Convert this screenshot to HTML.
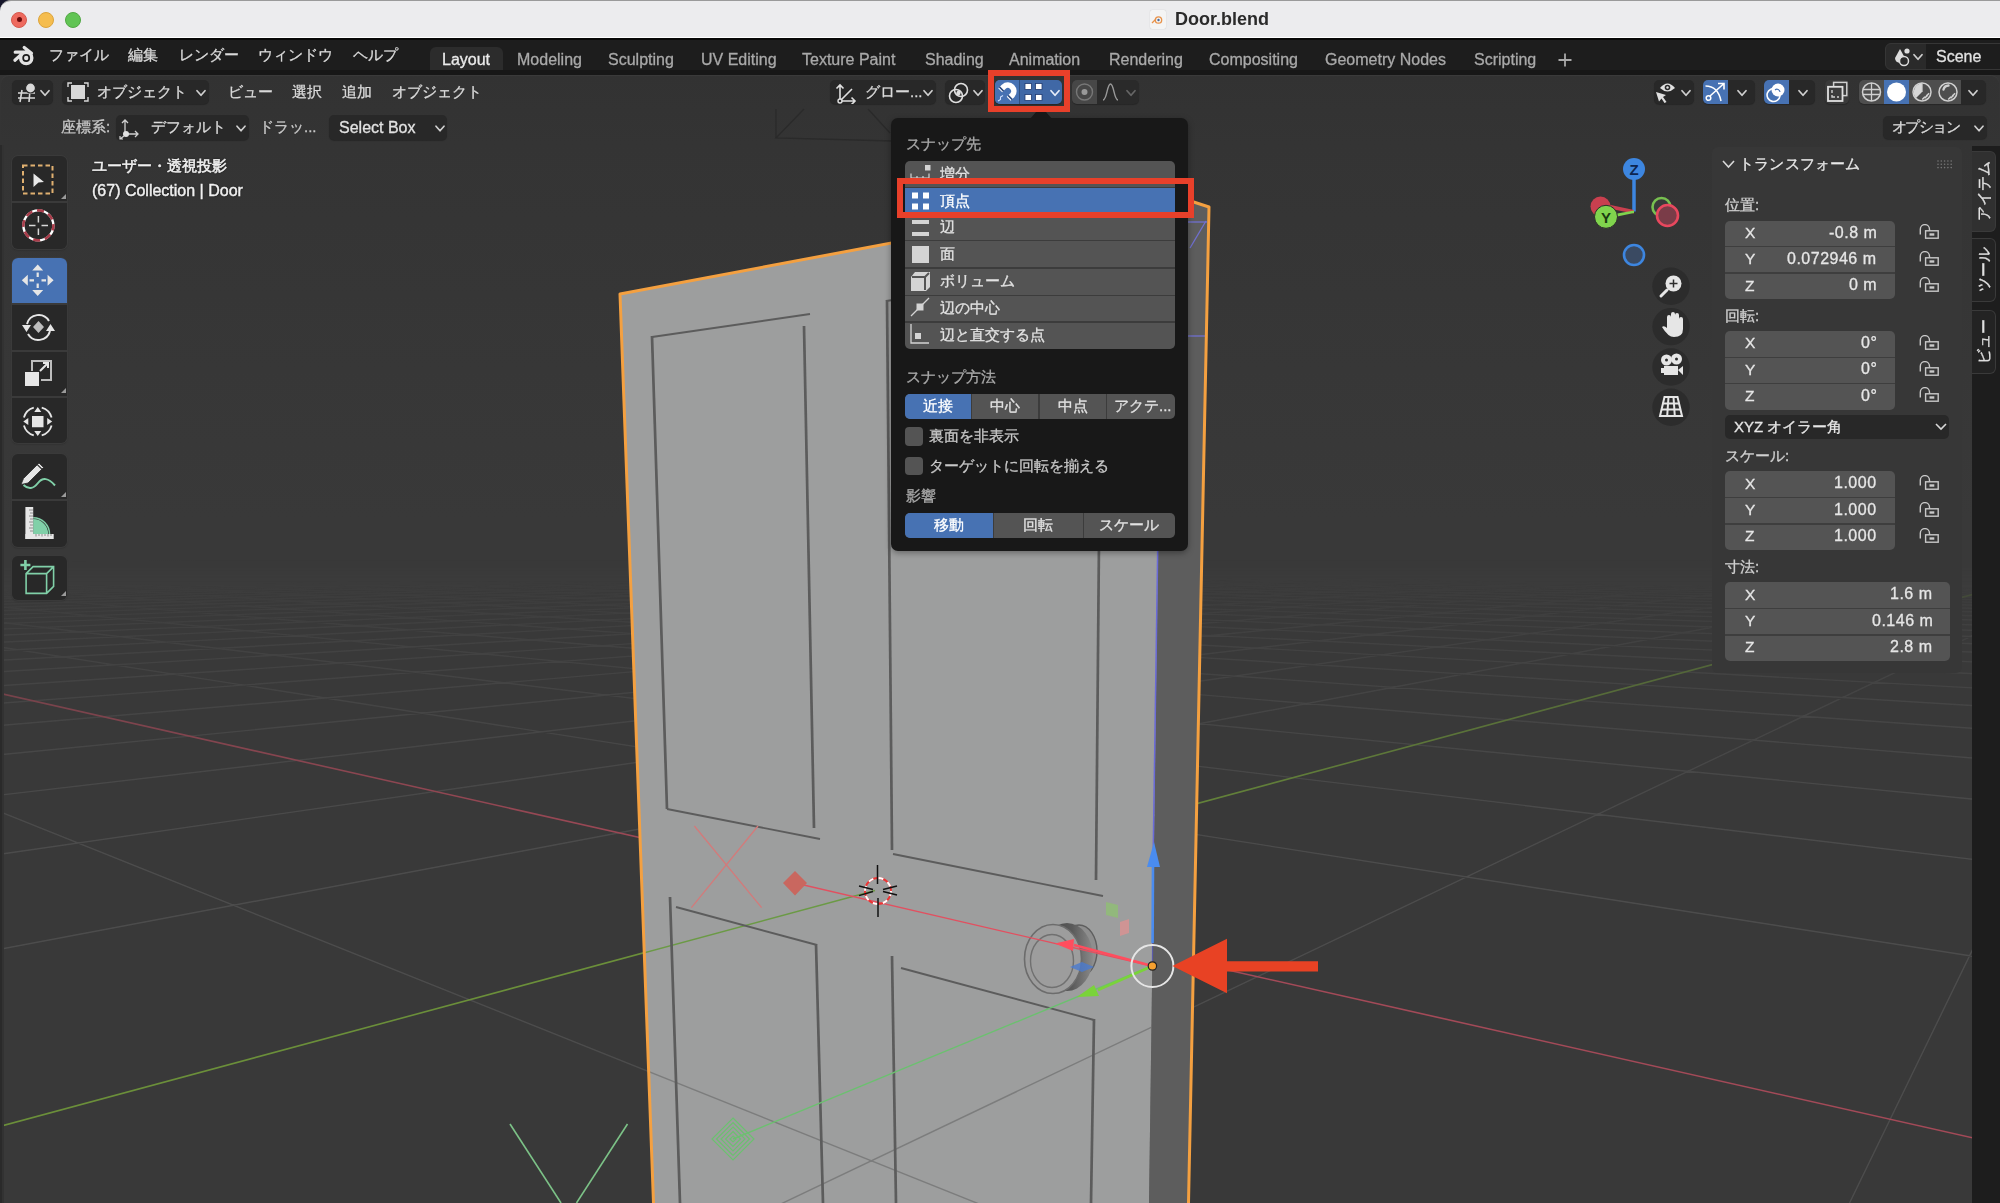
<!DOCTYPE html><html><head><meta charset="utf-8"><style>
*{margin:0;padding:0;box-sizing:border-box}
html,body{width:2000px;height:1203px;overflow:hidden;background:#393939}
body{font-family:"Liberation Sans",sans-serif}
.a{position:absolute}
.t{position:absolute;white-space:nowrap;line-height:1;font-family:"Liberation Sans",sans-serif;-webkit-text-stroke:0.3px currentColor;will-change:transform}
</style></head><body><svg class="a" style="left:0;top:0" width="2000" height="1203" viewBox="0 0 2000 1203">
<defs><linearGradient id="gf" x1="0" y1="0" x2="0" y2="1203" gradientUnits="userSpaceOnUse">
<stop offset="0" stop-color="#fff" stop-opacity="0"/><stop offset="0.465" stop-color="#fff" stop-opacity="0"/><stop offset="0.53" stop-color="#fff" stop-opacity="0.45"/><stop offset="0.72" stop-color="#fff" stop-opacity="1"/></linearGradient>
<mask id="gm"><rect x="0" y="0" width="2000" height="1203" fill="url(#gf)"/></mask>
<clipPath id="dc"><polygon points="620,294 1163,192 1149,1203 653.5,1203 "/></clipPath>
</defs>
<linearGradient id="vbg" x1="0" y1="145" x2="0" y2="520" gradientUnits="userSpaceOnUse"><stop offset="0" stop-color="#343434"/><stop offset="1" stop-color="#393939"/></linearGradient><rect x="0" y="0" width="2000" height="1203" fill="url(#vbg)"/>
<g mask="url(#gm)">
<path d="M11643.9 642.9L652014.9 7531.0M11643.9 642.9L879.5 553.9M10972.2 637.3L640752.2 7531.0M12351.2 650.5L868.1 554.0M10370.0 632.4L629489.5 7531.0M13172.6 659.3L856.5 554.1M9826.9 627.9L618226.7 7531.0M14138.2 669.7L844.6 554.2M9334.8 623.8L606964.0 7531.0M15289.6 682.1L832.6 554.3M8886.7 620.1L595701.3 7531.0M16686.2 697.1L820.3 554.5M8477.0 616.7L584438.5 7531.0M18415.5 715.7L807.8 554.6M8100.9 613.6L573175.8 7531.0M20612.6 739.4L795.0 554.7M7754.6 610.7L561913.1 7531.0M23496.9 770.4L782.1 554.8M7434.5 608.1L550650.3 7531.0M27450.9 812.9L768.8 555.0M7137.9 605.6L539387.6 7531.0M33204.6 874.8L755.3 555.1M6862.2 603.3L528124.9 7531.0M42349.3 973.2L741.6 555.2M6605.2 601.2L516862.1 7531.0M59134.9 1153.7L727.6 555.4M6365.3 599.2L505599.4 7531.0M100009.6 1593.4L713.3 555.5M6140.6 597.4L494336.7 7531.0M348569.7 4267.0L698.7 555.7M5929.8 595.6L483073.9 7531.0M640940.1 7531.0L683.8 555.8M5731.7 594.0L471811.2 7531.0M627371.3 7531.0L668.7 556.0M5545.1 592.5L460548.5 7531.0M613802.5 7531.0L653.2 556.1M5369.1 591.0L449285.7 7531.0M600233.7 7531.0L637.4 556.3M5202.7 589.6L438023.0 7531.0M586664.9 7531.0L621.2 556.4M5045.3 588.3L426760.3 7531.0M573096.1 7531.0L604.7 556.6M4896.1 587.1L415497.5 7531.0M559527.3 7531.0L587.9 556.8M4754.4 585.9L404234.8 7531.0M545958.5 7531.0L570.7 556.9M4619.8 584.8L392972.1 7531.0M532389.7 7531.0L553.1 557.1M4491.7 583.7L381709.4 7531.0M518820.9 7531.0L535.1 557.3M4369.7 582.7L370446.6 7531.0M505252.1 7531.0L516.7 557.5M4253.2 581.8L359183.9 7531.0M491683.3 7531.0L497.9 557.7M4142.1 580.8L347921.2 7531.0M478114.5 7531.0L478.7 557.9M4035.8 580.0L336658.4 7531.0M464545.7 7531.0L459.0 558.1M3934.1 579.1L325395.7 7531.0M450976.9 7531.0L438.9 558.3M3836.8 578.3L314133.0 7531.0M437408.1 7531.0L418.3 558.5M3743.4 577.6L302870.2 7531.0M423839.3 7531.0L397.2 558.7M3653.8 576.8L291607.5 7531.0M410270.5 7531.0L375.5 558.9M3567.8 576.1L280344.8 7531.0M396701.7 7531.0L353.4 559.1M3485.2 575.4L269082.0 7531.0M383132.9 7531.0L330.6 559.3M3405.7 574.8L257819.3 7531.0M369564.0 7531.0L307.3 559.6M3329.1 574.1L246556.6 7531.0M355995.2 7531.0L283.5 559.8M3255.4 573.5L235293.8 7531.0M342426.4 7531.0L258.9 560.0M3184.4 572.9L224031.1 7531.0M328857.6 7531.0L233.8 560.3M3115.9 572.4L212768.4 7531.0M315288.8 7531.0L208.0 560.6M3049.7 571.8L201505.6 7531.0M301720.0 7531.0L181.4 560.8M2985.9 571.3L190242.9 7531.0M288151.2 7531.0L154.2 561.1M2924.2 570.8L178980.2 7531.0M274582.4 7531.0L126.2 561.4M2864.5 570.3L167717.4 7531.0M261013.6 7531.0L97.4 561.7M2806.8 569.8L156454.7 7531.0M247444.8 7531.0L67.7 562.0M2750.9 569.3L145192.0 7531.0M233876.0 7531.0L37.2 562.3M2696.8 568.9L133929.2 7531.0M220307.2 7531.0L5.9 562.6M2644.4 568.5L122666.5 7531.0M206738.4 7531.0L-26.4 562.9M2593.6 568.0L111403.8 7531.0M193169.6 7531.0L-59.7 563.2M2544.3 567.6L100141.1 7531.0M179600.8 7531.0L-94.1 563.6M2496.5 567.2L88878.3 7531.0M166032.0 7531.0L-129.5 563.9M2450.1 566.9L77615.6 7531.0M152463.2 7531.0L-166.0 564.3M2405.0 566.5L66352.9 7531.0M138894.4 7531.0L-203.7 564.7M2361.2 566.1L55090.1 7531.0M125325.6 7531.0L-242.6 565.0M2318.6 565.8L43827.4 7531.0M111756.8 7531.0L-282.8 565.4M2277.2 565.4L32564.7 7531.0M98188.0 7531.0L-324.4 565.9M2236.9 565.1L21301.9 7531.0M84619.2 7531.0L-367.4 566.3M2197.8 564.8L10039.2 7531.0M71050.4 7531.0L-412.0 566.7M2159.6 564.5L-1223.5 7531.0M57481.6 7531.0L-458.1 567.2M2122.5 564.1L-12486.3 7531.0M43912.8 7531.0L-505.9 567.7M2051.0 563.6L-35011.7 7531.0M16775.2 7531.0L-606.9 568.7M2016.7 563.3L-46274.5 7531.0M3206.4 7531.0L-660.3 569.2M1983.1 563.0L-57537.2 7531.0M-10362.4 7531.0L-715.9 569.8M1950.4 562.7L-68799.9 7531.0M-23931.2 7531.0L-773.6 570.3M1918.5 562.5L-80062.7 7531.0M-37500.0 7531.0L-833.7 570.9M1887.4 562.2L-91325.4 7531.0M-51068.8 7531.0L-896.3 571.6M1857.0 561.9L-102588.1 7531.0M-64637.6 7531.0L-961.5 572.2M1827.3 561.7L-113850.9 7531.0M-78206.4 7531.0L-1029.6 572.9M1798.3 561.5L-125113.6 7531.0M-91775.2 7531.0L-1100.8 573.6M1770.0 561.2L-136376.3 7531.0M-105344.0 7531.0L-1175.1 574.3M1742.3 561.0L-147639.1 7531.0M-118912.8 7531.0L-1253.0 575.1M1715.3 560.8L-158901.8 7531.0M-132481.6 7531.0L-1334.5 575.9M1688.8 560.6L-170164.5 7531.0M-146050.4 7531.0L-1420.0 576.8M1662.9 560.3L-181427.2 7531.0M-159619.2 7531.0L-1509.8 577.7M1637.6 560.1L-192690.0 7531.0M-173188.0 7531.0L-1604.1 578.6M1612.8 559.9L-203952.7 7531.0M-186756.8 7531.0L-1703.5 579.6M1588.5 559.7L-215215.4 7531.0M-200325.6 7531.0L-1808.2 580.6M1564.8 559.5L-226478.2 7531.0M-213894.4 7531.0L-1918.7 581.7M1541.5 559.3L-237740.9 7531.0M-227463.2 7531.0L-2035.6 582.9M1518.7 559.2L-249003.6 7531.0M-241032.0 7531.0L-2159.3 584.1M1496.4 559.0L-260266.4 7531.0M-254600.8 7531.0L-2290.5 585.4M1474.5 558.8L-271529.1 7531.0M-268169.6 7531.0L-2430.0 586.8M1453.1 558.6L-282791.8 7531.0M-281738.4 7531.0L-2578.4 588.3M1432.1 558.4L-294054.6 7531.0M-295307.2 7531.0L-2736.7 589.9M1411.5 558.3L-305317.3 7531.0M-308876.0 7531.0L-2905.9 591.6M1391.3 558.1L-316580.0 7531.0M-322444.9 7531.0L-3087.3 593.4M1371.5 557.9L-327842.8 7531.0M-336013.7 7531.0L-3282.0 595.3M1352.1 557.8L-339105.5 7531.0M-349582.5 7531.0L-3491.8 597.4M1333.0 557.6L-350368.2 7531.0M-363151.3 7531.0L-3718.3 599.7M1314.3 557.5L-361631.0 7531.0M-376720.1 7531.0L-3963.7 602.1M1295.9 557.3L-372893.7 7531.0M-390288.9 7531.0L-4230.4 604.8M1277.9 557.2L-384156.4 7531.0M-403857.7 7531.0L-4521.4 607.7M1260.2 557.0L-395419.2 7531.0M-417426.5 7531.0L-4840.1 610.8M1242.8 556.9L-406681.9 7531.0M-430995.3 7531.0L-5190.7 614.3M1225.7 556.7L-417944.6 7531.0M-444564.1 7531.0L-5578.1 618.2M1208.9 556.6L-429207.4 7531.0M-458132.9 7531.0L-6008.7 622.5M1192.4 556.5L-440470.1 7531.0M-471701.7 7531.0L-6489.8 627.3M1176.2 556.3L-451732.8 7531.0M-485270.5 7531.0L-7031.2 632.7M1160.3 556.2L-462995.5 7531.0M-498839.3 7531.0L-7644.7 638.8M1144.7 556.1L-474258.3 7531.0M-512408.1 7531.0L-8345.8 645.8M1129.3 555.9L-485521.0 7531.0M-525976.9 7531.0L-9154.9 653.8M1114.1 555.8L-496783.7 7531.0M-539545.7 7531.0L-10098.8 663.2M1099.3 555.7L-508046.5 7531.0M-553114.5 7531.0L-11214.3 674.3M1084.6 555.6L-519309.2 7531.0M-566683.3 7531.0L-12552.9 687.7M1070.2 555.4L-530571.9 7531.0M-580252.1 7531.0L-14189.1 704.0M1056.1 555.3L-541834.7 7531.0M-593820.9 7531.0L-16234.3 724.3M1042.2 555.2L-553097.4 7531.0M-607389.7 7531.0L-18864.0 750.5M1028.4 555.1L-564360.1 7531.0M-620958.5 7531.0L-22370.3 785.5M1015.0 555.0L-575622.9 7531.0M-634527.3 7531.0L-27279.3 834.4M1001.7 554.9L-586885.6 7531.0M-648096.1 7531.0L-34643.5 907.7M988.6 554.8L-598148.3 7531.0M-661664.9 7531.0L-46918.4 1030.0M975.7 554.7L-609411.1 7531.0M-675233.7 7531.0L-71473.4 1274.6M963.1 554.6L-620673.8 7531.0M-688802.5 7531.0L-145179.7 2008.9M950.6 554.5L-631936.5 7531.0M938.3 554.4L-643199.3 7531.0M926.2 554.3L-654462.0 7531.0M914.3 554.2L-665724.7 7531.0M902.5 554.1L-676987.5 7531.0M890.9 554.0L-688250.2 7531.0M879.5 553.9L-699512.9 7531.0" stroke="#5c5c5c" stroke-opacity="0.55" stroke-width="1.4" fill="none"/>
<path d="M30344.0 7531.0L-555.5 568.2" stroke="#a34a58" stroke-width="1.6" fill="none"/>
<path d="M2086.3 563.8L-23749.0 7531.0" stroke="#6b8f3a" stroke-width="1.6" fill="none"/>
</g>
<polygon points="1163,192 1209,207 1188.5,1203 1149,1203" fill="#5d5d5d"/>
<polygon points="620,294 1163,192 1149,1203 653.5,1203" fill="#9d9e9e"/>
<g clip-path="url(#dc)">
<path d="M6752.2 2214.9L21301.9 7531.0M3138.6 1400.6L10039.2 7531.0M1890.2 1119.3L-1223.5 7531.0M1257.4 976.7L-12486.3 7531.0M16775.2 7531.0L-606.9 568.7M618.9 832.8L-35011.7 7531.0M3206.4 7531.0L-660.3 569.2M435.3 791.4L-46274.5 7531.0M-10362.4 7531.0L-715.9 569.8M297.4 760.3L-57537.2 7531.0M-23931.2 7531.0L-773.6 570.3M189.9 736.1L-68799.9 7531.0M-37500.0 7531.0L-833.7 570.9M103.8 716.7L-80062.7 7531.0M-51068.8 7531.0L-896.3 571.6M33.3 700.8L-91325.4 7531.0M-64637.6 7531.0L-961.5 572.2M-25.6 687.6L-102588.1 7531.0M-78206.4 7531.0L-1029.6 572.9M-75.4 676.3L-113850.9 7531.0M-91775.2 7531.0L-1100.8 573.6M-118.1 666.7L-125113.6 7531.0M-105344.0 7531.0L-1175.1 574.3M-155.2 658.4L-136376.3 7531.0M-118912.8 7531.0L-1253.0 575.1M-187.6 651.1L-147639.1 7531.0M-132481.6 7531.0L-1334.5 575.9M-216.3 644.6L-158901.8 7531.0M-146050.4 7531.0L-1420.0 576.8M-241.7 638.9L-170164.5 7531.0M-159619.2 7531.0L-1509.8 577.7M-264.5 633.7L-181427.2 7531.0M-173188.0 7531.0L-1604.1 578.6M-285.0 629.1L-192690.0 7531.0M-186756.8 7531.0L-1703.5 579.6M-303.6 624.9L-203952.7 7531.0M-200325.6 7531.0L-1808.2 580.6M-320.5 621.1L-215215.4 7531.0M-213894.4 7531.0L-1918.7 581.7M-335.9 617.6L-226478.2 7531.0M-227463.2 7531.0L-2035.6 582.9M-350.0 614.5L-237740.9 7531.0M-241032.0 7531.0L-2159.3 584.1M-363.0 611.5L-249003.6 7531.0M-254600.8 7531.0L-2290.5 585.4M-375.1 608.8L-260266.4 7531.0M-268169.6 7531.0L-2430.0 586.8M-386.2 606.3L-271529.1 7531.0M-281738.4 7531.0L-2578.4 588.3M-396.5 604.0L-282791.8 7531.0M-295307.2 7531.0L-2736.7 589.9M-406.1 601.8L-294054.6 7531.0M-308876.0 7531.0L-2905.9 591.6M-415.1 599.8L-305317.3 7531.0M-322444.9 7531.0L-3087.3 593.4M-423.5 597.9L-316580.0 7531.0M-336013.7 7531.0L-3282.0 595.3M-431.4 596.1L-327842.8 7531.0M-349582.5 7531.0L-3491.8 597.4M-438.8 594.5L-339105.5 7531.0M-363151.3 7531.0L-3718.3 599.7M-445.8 592.9L-350368.2 7531.0M-376720.1 7531.0L-3963.7 602.1M-452.3 591.4L-361631.0 7531.0M-390288.9 7531.0L-4230.4 604.8M-458.5 590.0L-372893.7 7531.0M-403857.7 7531.0L-4521.4 607.7M-464.4 588.7L-384156.4 7531.0M-417426.5 7531.0L-4840.1 610.8M-470.0 587.4L-395419.2 7531.0M-430995.3 7531.0L-5190.7 614.3M-475.2 586.2L-406681.9 7531.0M-444564.1 7531.0L-5578.1 618.2M-480.2 585.1L-417944.6 7531.0M-458132.9 7531.0L-6008.7 622.5M-485.0 584.0L-429207.4 7531.0M-471701.7 7531.0L-6489.8 627.3M-489.6 583.0L-440470.1 7531.0M-485270.5 7531.0L-7031.2 632.7M-493.9 582.0L-451732.8 7531.0M-498839.3 7531.0L-7644.7 638.8M-498.0 581.1L-462995.5 7531.0M-512408.1 7531.0L-8345.8 645.8M-502.0 580.2L-474258.3 7531.0M-525976.9 7531.0L-9154.9 653.8M-505.7 579.4L-485521.0 7531.0M-539545.7 7531.0L-10098.8 663.2M-509.4 578.5L-496783.7 7531.0M-553114.5 7531.0L-11214.3 674.3M-512.8 577.8L-508046.5 7531.0M-566683.3 7531.0L-12552.9 687.7M-516.2 577.0L-519309.2 7531.0M-580252.1 7531.0L-14189.1 704.0M-519.3 576.3L-530571.9 7531.0M-593820.9 7531.0L-16234.3 724.3M-522.4 575.6L-541834.7 7531.0M-607389.7 7531.0L-18864.0 750.5M-525.4 574.9L-553097.4 7531.0M-620958.5 7531.0L-22370.3 785.5M-528.2 574.3L-564360.1 7531.0M-634527.3 7531.0L-27279.3 834.4M-530.9 573.7L-575622.9 7531.0M-648096.1 7531.0L-34643.5 907.7M-533.6 573.1L-586885.6 7531.0M-661664.9 7531.0L-46918.4 1030.0M-536.1 572.5L-598148.3 7531.0M-675233.7 7531.0L-71473.4 1274.6M-538.6 572.0L-609411.1 7531.0M-688802.5 7531.0L-145179.7 2008.9M-540.9 571.4L-620673.8 7531.0M-543.2 570.9L-631936.5 7531.0M-545.4 570.4L-643199.3 7531.0M-547.6 569.9L-654462.0 7531.0M-549.6 569.5L-665724.7 7531.0M-551.6 569.0L-676987.5 7531.0M-553.6 568.6L-688250.2 7531.0M-555.5 568.2L-699512.9 7531.0" stroke="#555" stroke-opacity="0.45" stroke-width="1.4" fill="none"/>
<path d="M875.0 890.5L-23749.0 7531.0" stroke="#6b9a45" stroke-width="1.5" fill="none"/>
</g>
<line x1="810" y1="314" x2="652" y2="337" stroke="#5c5c5c" stroke-width="1.9" fill="none"/><line x1="652" y1="336" x2="667" y2="809" stroke="#5c5c5c" stroke-width="2.7" fill="none" stroke-linecap="butt"/><line x1="667" y1="809" x2="820" y2="839" stroke="#5c5c5c" stroke-width="1.9" fill="none"/><line x1="804" y1="326" x2="814" y2="828" stroke="#5c5c5c" stroke-width="2.7" fill="none" stroke-linecap="butt"/><line x1="887" y1="300" x2="892" y2="850" stroke="#5c5c5c" stroke-width="2.7" fill="none" stroke-linecap="butt"/><line x1="886" y1="301" x2="893" y2="300" stroke="#5c5c5c" stroke-width="1.9" fill="none"/><line x1="1099" y1="540" x2="1096" y2="880" stroke="#5c5c5c" stroke-width="2.7" fill="none" stroke-linecap="butt"/><line x1="893" y1="854" x2="1103" y2="896" stroke="#5c5c5c" stroke-width="1.9" fill="none"/><line x1="676" y1="907" x2="817" y2="945" stroke="#5c5c5c" stroke-width="1.9" fill="none"/><line x1="816" y1="944" x2="823" y2="1203" stroke="#5c5c5c" stroke-width="2.7" fill="none" stroke-linecap="butt"/><line x1="670" y1="897" x2="680" y2="1203" stroke="#5c5c5c" stroke-width="2.7" fill="none" stroke-linecap="butt"/><line x1="892" y1="956" x2="896" y2="1203" stroke="#5c5c5c" stroke-width="2.7" fill="none" stroke-linecap="butt"/><line x1="901" y1="968" x2="1094" y2="1020" stroke="#5c5c5c" stroke-width="1.9" fill="none"/><line x1="1094" y1="1019" x2="1091" y2="1203" stroke="#5c5c5c" stroke-width="2.7" fill="none" stroke-linecap="butt"/><line x1="1163" y1="192" x2="1153" y2="866" stroke="#6a6ad8" stroke-width="1.5"/><line x1="1190" y1="248" x2="1206" y2="221" stroke="#7070d0" stroke-width="1.3"/><line x1="1188" y1="222" x2="1207" y2="222" stroke="#7070d0" stroke-width="1.3"/><line x1="1188" y1="336" x2="1206" y2="336" stroke="#7070d0" stroke-width="1.3"/><polyline points="653.5,1203 620,294 1163,192 1209,207 1188.5,1203" stroke="#f4a040" stroke-width="3" fill="none" stroke-linejoin="round"/><line x1="510" y1="1124" x2="561" y2="1203" stroke="#7cc287" stroke-width="1.6"/><line x1="627.5" y1="1124" x2="576.5" y2="1203" stroke="#7cc287" stroke-width="1.6"/><line x1="694.4" y1="826" x2="761.6" y2="907.6" stroke="#d47a7a" stroke-width="1.3"/><line x1="758" y1="826" x2="691.4" y2="907.6" stroke="#d47a7a" stroke-width="1.3"/><defs><linearGradient id="kb" x1="0" y1="0" x2="1" y2="0"><stop offset="0" stop-color="#444"/><stop offset="0.6" stop-color="#5a5a5a"/><stop offset="1" stop-color="#8a8a8a"/></linearGradient></defs><ellipse cx="1079" cy="951" rx="18" ry="26" fill="#8e8e8e" stroke="#5e5e5e" stroke-width="1.4"/><ellipse cx="1067" cy="957" rx="26" ry="34" fill="url(#kb)"/><ellipse cx="1053" cy="959" rx="28.5" ry="34.5" fill="#9d9d9d" stroke="#6c6c6c" stroke-width="1.6"/><ellipse cx="1052" cy="961" rx="21.5" ry="26.5" fill="none" stroke="#707070" stroke-width="1.4"/><line x1="795" y1="883" x2="1152" y2="966" stroke="#e25060" stroke-width="1.4"/><polygon points="795,871 807,883 795,895.6 783,883" fill="#c9675f"/><line x1="733" y1="1139" x2="1152" y2="966" stroke="#6cc070" stroke-width="1.4"/><polygon points="733,1118 754,1139 733,1160 712,1139" fill="none" stroke="#6cc070" stroke-width="1.2"/><polygon points="733,1122.5 749.5,1139 733,1155.5 716.5,1139" fill="none" stroke="#6cc070" stroke-width="1.2"/><polygon points="733,1127 745,1139 733,1151 721,1139" fill="none" stroke="#6cc070" stroke-width="1.2"/><polygon points="733,1131.5 740.5,1139 733,1146.5 725.5,1139" fill="none" stroke="#6cc070" stroke-width="1.2"/><polygon points="733,1136 736,1139 733,1142 730,1139" fill="none" stroke="#6cc070" stroke-width="1.2"/><polygon points="1106,902 1118,905 1118,918 1106,915" fill="#8fc070" fill-opacity="0.75"/><polygon points="1120,922 1129,919 1129,933 1120,936" fill="#e09090" fill-opacity="0.75"/><polygon points="1070,967 1082,962 1094,967 1082,972" fill="#4a7ad0" fill-opacity="0.8"/><line x1="1152.6" y1="943" x2="1153" y2="866" stroke="#4a8cf0" stroke-width="2.6"/><line x1="1152.4" y1="966" x2="1152.6" y2="943" stroke="#5a5aa8" stroke-width="1.2"/><polygon points="1154,842 1160,867 1147,867" fill="#4a8cf0"/><line x1="1152.4" y1="966" x2="1074" y2="945" stroke="#ff4d5e" stroke-width="2.6"/><polygon points="1055,943.6 1074,939 1073,951" fill="#ff4d5e"/><line x1="1152.4" y1="966" x2="1098" y2="990" stroke="#7ad33a" stroke-width="2.6"/><polygon points="1077,997 1094,985 1099,996" fill="#7ad33a"/><circle cx="1152.4" cy="966" r="21" fill="none" stroke="#e6e6e6" stroke-width="2"/><circle cx="1152.4" cy="966" r="4.2" fill="#f5a030" stroke="#222" stroke-width="1.2"/><circle cx="878" cy="891" r="13" fill="none" stroke="#e33" stroke-width="2"/><circle cx="878" cy="891" r="13" fill="none" stroke="#fff" stroke-width="2" stroke-dasharray="5.1 5.1"/><line x1="877.5" y1="865" x2="877.5" y2="884" stroke="#111" stroke-width="1.5"/><line x1="878" y1="898" x2="878" y2="917" stroke="#111" stroke-width="1.5"/><line x1="859" y1="886" x2="873" y2="889.5" stroke="#111" stroke-width="1.5"/><line x1="859" y1="895.6" x2="873" y2="891.5" stroke="#111" stroke-width="1.5"/><line x1="883" y1="889.5" x2="897" y2="886" stroke="#111" stroke-width="1.5"/><line x1="883" y1="891.5" x2="897" y2="895" stroke="#111" stroke-width="1.5"/><polygon points="1172.4,966 1227,938.8 1227,961.2 1318,961.2 1318,971.6 1227,971.6 1227,993.2" fill="#e84224"/></svg><div class="a" style="left:0px;top:0px;width:20px;height:20px;background:#16162a;"></div><div class="a" style="left:0px;top:0px;width:2000px;height:40px;background:#ececee;border-top:1px solid #9a9a9a;border-bottom:2px solid #080808;border-top-left-radius:11px;box-shadow:inset 0 -1px 0 #ffffff"></div><div class="a" style="left:11px;top:11.5px;width:16px;height:16px;border-radius:50%;background:#ee6a5f;border:1px solid #d65a4e"></div><div class="a" style="left:38px;top:11.5px;width:16px;height:16px;border-radius:50%;background:#f5bd4f;border:1px solid #dca43c"></div><div class="a" style="left:65px;top:11.5px;width:16px;height:16px;border-radius:50%;background:#61c454;border:1px solid #50a843"></div><div class="a" style="left:16.5px;top:17px;width:5px;height:5px;border-radius:50%;background:#6b0a0a"></div><div class="a" style="left:1150px;top:10px;width:16px;height:19px;background:#f4f4f4;border-radius:2px;box-shadow:0 0 1px #bbb"></div><svg class="a" style="left:1150px;top:10px;" width="16" height="19" viewBox="0 0 16 19"><circle cx="8.5" cy="10" r="3.2" fill="none" stroke="#e8924a" stroke-width="1.3"/><circle cx="8.5" cy="10" r="1.2" fill="#4a6a9a"/><line x1="2" y1="13" x2="6" y2="9" stroke="#e8924a" stroke-width="1.2"/></svg><div class="t" style="left:1175px;top:9.8px;font-size:18px;color:#2a2a2a;font-weight:bold;-webkit-text-stroke:0">Door.blend</div><div class="a" style="left:0px;top:40px;width:2000px;height:35px;background:#1d1d1d;"></div><svg class="a" style="left:12px;top:44px;" width="24" height="24" viewBox="0 0 24 24"><circle cx="14.2" cy="14" r="5.6" fill="none" stroke="#e4e4e4" stroke-width="3.4"/><circle cx="14.2" cy="14" r="2.2" fill="#e4e4e4"/><path d="M12.2 3.4 L19.5 9.2 M3.2 8.2 H13.5 M2.9 16.2 L9 10.8" stroke="#e4e4e4" stroke-width="3.2" stroke-linecap="round"/></svg><div class="t" style="left:49px;top:47.3px;font-size:15px;color:#dadada;">ファイル</div><div class="t" style="left:128px;top:47.3px;font-size:15px;color:#dadada;">編集</div><div class="t" style="left:179px;top:47.3px;font-size:15px;color:#dadada;">レンダー</div><div class="t" style="left:258px;top:47.3px;font-size:15px;color:#dadada;">ウィンドウ</div><div class="t" style="left:353px;top:47.3px;font-size:15px;color:#dadada;">ヘルプ</div><div class="a" style="left:430px;top:47px;width:73px;height:24px;background:#2c2c2c;border-radius:6px 6px 0 0"></div><div class="a" style="left:0px;top:70px;width:2000px;height:5px;background:#171717;"></div><div class="t" style="left:442px;top:51.5px;font-size:16px;color:#ebebeb;">Layout</div><div class="t" style="left:517px;top:51.5px;font-size:16px;color:#a9a9a9;">Modeling</div><div class="t" style="left:608px;top:51.5px;font-size:16px;color:#a9a9a9;">Sculpting</div><div class="t" style="left:701px;top:51.5px;font-size:16px;color:#a9a9a9;">UV Editing</div><div class="t" style="left:802px;top:51.5px;font-size:16px;color:#a9a9a9;">Texture Paint</div><div class="t" style="left:925px;top:51.5px;font-size:16px;color:#a9a9a9;">Shading</div><div class="t" style="left:1009px;top:51.5px;font-size:16px;color:#a9a9a9;">Animation</div><div class="t" style="left:1109px;top:51.5px;font-size:16px;color:#a9a9a9;">Rendering</div><div class="t" style="left:1209px;top:51.5px;font-size:16px;color:#a9a9a9;">Compositing</div><div class="t" style="left:1325px;top:51.5px;font-size:16px;color:#a9a9a9;">Geometry Nodes</div><div class="t" style="left:1474px;top:51.5px;font-size:16px;color:#a9a9a9;">Scripting</div><svg class="a" style="left:1555px;top:50px;" width="20" height="20" viewBox="0 0 20 20"><path d="M10 3.5V16.5M3.5 10H16.5" stroke="#a9a9a9" stroke-width="1.8"/></svg><div class="a" style="left:1885px;top:43px;width:120px;height:27px;background:#2a2a2a;border-radius:6px 0 0 6px;border:1px solid #363636"></div><div class="a" style="left:1926px;top:44px;width:74px;height:25px;background:#1d1d1d;"></div><svg class="a" style="left:1890px;top:46px;" width="36" height="22" viewBox="0 0 36 22"><path d="M10 3 L5 12 A5 5 0 0 0 15 12 Z" fill="#dcdcdc"/><circle cx="17" cy="5" r="2.6" fill="#dcdcdc"/><circle cx="14" cy="15" r="4.5" fill="#2a2a2a" stroke="#dcdcdc" stroke-width="1.5"/><polyline points="24.0,8.75 28,13.25 32.0,8.75" stroke="#d0d0d0" stroke-width="1.7" fill="none" stroke-linecap="round" stroke-linejoin="round"/></svg><div class="t" style="left:1936px;top:48.5px;font-size:16px;color:#e2e2e2;">Scene</div><div class="a" style="left:1px;top:75px;width:1998px;height:70px;background:linear-gradient(#323232,#343434);border-radius:8px 8px 0 0;box-shadow:inset 0 1px 0 #3a3a3a"></div><div class="a" style="left:12px;top:80px;width:41px;height:24px;background:#282828;border-radius:5px;box-shadow:0 1px 1px rgba(0,0,0,0.25);"></div><div class="a" style="left:62px;top:80px;width:147px;height:24px;background:#282828;border-radius:5px;box-shadow:0 1px 1px rgba(0,0,0,0.25);"></div><svg class="a" style="left:12px;top:80px;" width="41" height="24" viewBox="0 0 41 24"><path d="M6 13 H23 M6 18 H23 M10 10 L8 22 M18 10 L17 22" stroke="#d8d8d8" stroke-width="1.6"/><circle cx="18.5" cy="8" r="5" fill="#d8d8d8" stroke="#282828" stroke-width="1.2"/><polyline points="29.0,10.75 33,15.25 37.0,10.75" stroke="#d0d0d0" stroke-width="1.7" fill="none" stroke-linecap="round" stroke-linejoin="round"/></svg><svg class="a" style="left:62px;top:80px;" width="147" height="24" viewBox="0 0 147 24"><rect x="9" y="5" width="14" height="14" fill="#d8d8d8"/><path d="M6 7V3H10M22 3H26V7M26 17V21H22M10 21H6V17" stroke="#d8d8d8" stroke-width="1.4" fill="none"/><polyline points="135.0,10.75 139,15.25 143.0,10.75" stroke="#d0d0d0" stroke-width="1.7" fill="none" stroke-linecap="round" stroke-linejoin="round"/></svg><div class="t" style="left:97px;top:84.3px;font-size:15px;color:#dadada;">オブジェクト</div><div class="t" style="left:227.5px;top:84.3px;font-size:15px;color:#dadada;">ビュー</div><div class="t" style="left:292px;top:84.3px;font-size:15px;color:#dadada;">選択</div><div class="t" style="left:342px;top:84.3px;font-size:15px;color:#dadada;">追加</div><div class="t" style="left:392px;top:84.3px;font-size:15px;color:#dadada;">オブジェクト</div><div class="a" style="left:830px;top:80px;width:106px;height:24px;background:#282828;border-radius:5px;box-shadow:0 1px 1px rgba(0,0,0,0.25);"></div><svg class="a" style="left:830px;top:80px;" width="106" height="24" viewBox="0 0 106 24"><path d="M10 21 V5 M6.5 8.5 L10 5 L13.5 8.5 M10 21 H25 M21.5 17.5 L25 21 L21.5 24.5 M10 21 L22 9" stroke="#e0e0e0" stroke-width="1.6" fill="none"/><circle cx="10" cy="21" r="2" fill="#282828" stroke="#e0e0e0" stroke-width="1.4"/><polyline points="94.0,10.75 98,15.25 102.0,10.75" stroke="#d0d0d0" stroke-width="1.7" fill="none" stroke-linecap="round" stroke-linejoin="round"/></svg><div class="t" style="left:865px;top:84.3px;font-size:15px;color:#dadada;">グロー...</div><div class="a" style="left:945px;top:80px;width:40px;height:24px;background:#282828;border-radius:5px;box-shadow:0 1px 1px rgba(0,0,0,0.25);"></div><svg class="a" style="left:945px;top:80px;" width="40" height="24" viewBox="0 0 40 24"><circle cx="16" cy="10" r="6.5" fill="none" stroke="#e0e0e0" stroke-width="1.6"/><circle cx="11" cy="16" r="6.5" fill="none" stroke="#e0e0e0" stroke-width="1.6"/><circle cx="13.5" cy="13" r="2.2" fill="#e0e0e0"/><polyline points="29.0,10.75 33,15.25 37.0,10.75" stroke="#d0d0d0" stroke-width="1.7" fill="none" stroke-linecap="round" stroke-linejoin="round"/></svg><div class="a" style="left:995px;top:80px;width:67px;height:24px;background:#4068a6;border-radius:5px;box-shadow:0 1px 1px rgba(0,0,0,0.25);"></div><div class="a" style="left:995px;top:80px;width:24px;height:24px;background:#4772b3;border-radius:5px 0 0 5px"></div><div class="a" style="left:1019px;top:80px;width:1.2px;height:24px;background:#2f5080;"></div><svg class="a" style="left:995px;top:80px;" width="67" height="24" viewBox="0 0 67 24"><path d="M5.2 10.3 L8.76 6.76 A6 6 0 0 1 17.24 15.24 L13.7 18.8" stroke="#fff" stroke-width="5.6" fill="none"/><path d="M4.4 6.9 L8.6 11.1 M13.1 15.4 L17.3 19.6" stroke="#2a4a80" stroke-width="1.5"/><path d="M3 21 L5.5 19.5 V17 L8 15.5" stroke="#cfe0ff" stroke-width="1.1" fill="none"/><rect x="30" y="3.5" width="6.5" height="6" fill="#fff" stroke="#203a70" stroke-width="0.8"/><rect x="40.5" y="3.5" width="6.5" height="6" fill="#fff" stroke="#203a70" stroke-width="0.8"/><rect x="30" y="14.5" width="6.5" height="6" fill="#fff" stroke="#203a70" stroke-width="0.8"/><rect x="40.5" y="14.5" width="6.5" height="6" fill="#fff" stroke="#203a70" stroke-width="0.8"/><polyline points="56.0,10.75 60,15.25 64.0,10.75" stroke="#e8eefa" stroke-width="1.7" fill="none" stroke-linecap="round" stroke-linejoin="round"/></svg><div class="a" style="left:1072px;top:80px;width:67px;height:24px;background:#2a2a2a;border-radius:5px;box-shadow:0 1px 1px rgba(0,0,0,0.25);"></div><div class="a" style="left:1072px;top:80px;width:25px;height:24px;background:#474747;border-radius:5px 0 0 5px"></div><svg class="a" style="left:1072px;top:80px;" width="67" height="24" viewBox="0 0 67 24"><circle cx="12.5" cy="12" r="8" fill="none" stroke="#777" stroke-width="1.4"/><circle cx="12.5" cy="12" r="3" fill="#999"/><path d="M31 20 C35 20 35 4 38.5 4 C42 4 42 20 46 20" stroke="#999" stroke-width="1.4" fill="none"/><polyline points="55.0,10.75 59,15.25 63.0,10.75" stroke="#666" stroke-width="1.7" fill="none" stroke-linecap="round" stroke-linejoin="round"/></svg><div class="a" style="left:988px;top:70px;width:82px;height:42px;background:transparent;border:6px solid #e8402a"></div><div class="a" style="left:1654px;top:80px;width:40px;height:24px;background:#282828;border-radius:5px;box-shadow:0 1px 1px rgba(0,0,0,0.25);"></div><svg class="a" style="left:1654px;top:80px;" width="40" height="24" viewBox="0 0 40 24"><path d="M2 12 L12 15 L9 17 L12.5 22 L10.5 23 L7.5 18.5 L5 21.5 Z" fill="#e0e0e0"/><path d="M6 8 Q13.5 -1 21 8 Q13.5 15 6 8 Z" fill="#e0e0e0"/><circle cx="13.5" cy="7.5" r="2.8" fill="#282828"/><circle cx="13.5" cy="7.5" r="1.2" fill="#e0e0e0"/><polyline points="28.0,10.75 32,15.25 36.0,10.75" stroke="#d0d0d0" stroke-width="1.7" fill="none" stroke-linecap="round" stroke-linejoin="round"/></svg><div class="a" style="left:1703px;top:80px;width:52px;height:24px;background:#282828;border-radius:5px;box-shadow:0 1px 1px rgba(0,0,0,0.25);"></div><div class="a" style="left:1703px;top:80px;width:25px;height:24px;background:#4772b3;border-radius:5px 0 0 5px"></div><svg class="a" style="left:1703px;top:80px;" width="52" height="24" viewBox="0 0 52 24"><path d="M2.5 6 Q15 6 18 21" stroke="#fff" stroke-width="1.6" fill="none"/><path d="M7 16 L21 3.5 M15 3.5 H21 V9.5" stroke="#fff" stroke-width="1.6" fill="none"/><circle cx="5.5" cy="18" r="2.3" fill="#4772b3" stroke="#fff" stroke-width="1.5"/><polyline points="35.0,10.75 39,15.25 43.0,10.75" stroke="#d0d0d0" stroke-width="1.7" fill="none" stroke-linecap="round" stroke-linejoin="round"/></svg><div class="a" style="left:1764px;top:80px;width:51px;height:24px;background:#282828;border-radius:5px;box-shadow:0 1px 1px rgba(0,0,0,0.25);"></div><div class="a" style="left:1764px;top:80px;width:25px;height:24px;background:#4772b3;border-radius:5px 0 0 5px"></div><svg class="a" style="left:1764px;top:80px;" width="51" height="24" viewBox="0 0 51 24"><circle cx="14" cy="10" r="6.5" fill="#fff"/><path d="M12 9 A6.5 6.5 0 1 0 16 16" stroke="#fff" stroke-width="1.6" fill="none"/><path d="M11 10 a3 3 0 0 1 5 2" stroke="#4772b3" stroke-width="1.2" fill="none"/><polyline points="35.0,10.75 39,15.25 43.0,10.75" stroke="#d0d0d0" stroke-width="1.7" fill="none" stroke-linecap="round" stroke-linejoin="round"/></svg><div class="a" style="left:1825px;top:80px;width:24px;height:24px;background:#3a3a3a;border-radius:5px;box-shadow:0 1px 1px rgba(0,0,0,0.25);"></div><svg class="a" style="left:1825px;top:80px;" width="24" height="24" viewBox="0 0 24 24"><rect x="8.6" y="2.4" width="13.2" height="13.2" fill="none" stroke="#d0d0d0" stroke-width="1.5"/><rect x="3" y="6.8" width="14.5" height="14.2" fill="#3c3c3c" stroke="#e0e0e0" stroke-width="1.8"/><path d="M7 10 V13 M7 15 V17 H10 M12 17 H14" stroke="#d0d0d0" stroke-width="1.4" fill="none"/></svg><div class="a" style="left:1859px;top:80px;width:127px;height:24px;background:#282828;border-radius:5px;box-shadow:0 1px 1px rgba(0,0,0,0.25);"></div><div class="a" style="left:1859px;top:80px;width:25px;height:24px;background:#4e4e4e;border-radius:5px 0 0 5px"></div><div class="a" style="left:1884px;top:80px;width:25px;height:24px;background:#4772b3;"></div><div class="a" style="left:1909px;top:80px;width:26px;height:24px;background:#4e4e4e;"></div><div class="a" style="left:1935px;top:80px;width:26px;height:24px;background:#4e4e4e;"></div><svg class="a" style="left:1859px;top:80px;" width="127" height="24" viewBox="0 0 127 24"><circle cx="12.5" cy="12" r="9" fill="none" stroke="#d0d0d0" stroke-width="1.5"/><path d="M12.5 3V21 M3.8 9.5H21.2M3.8 14.5H21.2" stroke="#d0d0d0" stroke-width="1.3"/><circle cx="37.5" cy="12" r="9.5" fill="#fff"/><circle cx="63" cy="12" r="9" fill="#4e4e4e" stroke="#d0d0d0" stroke-width="1.5"/><path d="M63 3.2 V12 L57 18 A9 9 0 0 1 63 3.2Z" fill="#d8d8d8"/><path d="M63 3.5V12" stroke="#d0d0d0" stroke-width="1.3"/><path d="M67.3 16.1L70.1 13.3" stroke="#d0d0d0" stroke-width="1.5"/><path d="M65.6 18.2L68.4 15.4" stroke="#d0d0d0" stroke-width="1.5"/><path d="M63.2 19.5L66.0 16.7" stroke="#d0d0d0" stroke-width="1.5"/><circle cx="89" cy="12" r="9" fill="none" stroke="#d0d0d0" stroke-width="1.5"/><path d="M84.5 9.5 A5.5 5.5 0 0 1 89.5 5.5" stroke="#d0d0d0" stroke-width="2.4" fill="none" stroke-linecap="round"/><path d="M93.3 16.1L96.1 13.3" stroke="#d0d0d0" stroke-width="1.5"/><path d="M91.6 18.2L94.4 15.4" stroke="#d0d0d0" stroke-width="1.5"/><path d="M89.2 19.5L92.0 16.7" stroke="#d0d0d0" stroke-width="1.5"/><polyline points="110.0,10.75 114,15.25 118.0,10.75" stroke="#d0d0d0" stroke-width="1.7" fill="none" stroke-linecap="round" stroke-linejoin="round"/></svg><svg class="a" style="left:760px;top:100px;" width="140" height="45" viewBox="0 0 140 45"><polyline points="44,9 16,38 133,41" stroke="#2a2a2a" stroke-width="1.3" fill="none"/><line x1="16" y1="9" x2="16" y2="38" stroke="#2a2a2a" stroke-width="1.3"/><line x1="108" y1="9" x2="130" y2="33" stroke="#2a2a2a" stroke-width="1.3"/></svg><div class="t" style="left:61px;top:119.3px;font-size:15px;color:#c8c8c8;">座標系:</div><div class="a" style="left:116px;top:115px;width:133px;height:25px;background:#282828;border-radius:5px;box-shadow:0 1px 1px rgba(0,0,0,0.25);"></div><svg class="a" style="left:116px;top:115px;" width="133" height="25" viewBox="0 0 133 25"><path d="M9 20 V5 M6 8 L9 5 L12 8 M10 19 H22 M19 16 L22 19 L19 22" stroke="#d0d0d0" stroke-width="1.3" fill="none"/><circle cx="10" cy="19" r="3" fill="#e0e0e0"/><path d="M8 21 L4 24 M4 21 V24 H7" stroke="#d0d0d0" stroke-width="1.2" fill="none"/><polyline points="121.0,11.25 125,15.75 129.0,11.25" stroke="#d0d0d0" stroke-width="1.7" fill="none" stroke-linecap="round" stroke-linejoin="round"/></svg><div class="t" style="left:151px;top:119.3px;font-size:15px;color:#dadada;">デフォルト</div><div class="t" style="left:259px;top:119.3px;font-size:15px;color:#c8c8c8;">ドラッ...</div><div class="a" style="left:329px;top:115px;width:118px;height:25px;background:#282828;border-radius:5px;box-shadow:0 1px 1px rgba(0,0,0,0.25);"></div><svg class="a" style="left:329px;top:115px;" width="118" height="25" viewBox="0 0 118 25"><polyline points="107.0,11.25 111,15.75 115.0,11.25" stroke="#d0d0d0" stroke-width="1.7" fill="none" stroke-linecap="round" stroke-linejoin="round"/></svg><div class="t" style="left:339px;top:119.5px;font-size:16px;color:#e2e2e2;">Select Box</div><div class="a" style="left:1883px;top:116px;width:104px;height:23px;background:#282828;border-radius:5px;box-shadow:0 1px 1px rgba(0,0,0,0.25);"></div><svg class="a" style="left:1883px;top:116px;" width="104" height="23" viewBox="0 0 104 23"><polyline points="92.0,10.25 96,14.75 100.0,10.25" stroke="#d0d0d0" stroke-width="1.7" fill="none" stroke-linecap="round" stroke-linejoin="round"/></svg><div class="t" style="left:1892px;top:119.3px;font-size:15px;color:#dadada;letter-spacing:-1.6px">オプション</div><div class="a" style="left:0px;top:145px;width:2px;height:1058px;background:#2a2a2a;"></div><div class="a" style="left:2px;top:145px;width:2px;height:1058px;background:#323232;"></div><div class="a" style="left:12px;top:156px;width:55px;height:93px;background:#282828;border-radius:6px;box-shadow:0 0 0 1px #3a3a3a,0 1px 2px rgba(0,0,0,0.3)"></div><div class="a" style="left:12px;top:201px;width:55px;height:1.5px;background:#3a3a3a;"></div><div class="a" style="left:12px;top:258px;width:55px;height:185px;background:#282828;border-radius:6px;box-shadow:0 0 0 1px #3a3a3a,0 1px 2px rgba(0,0,0,0.3)"></div><div class="a" style="left:12px;top:303px;width:55px;height:1.5px;background:#3a3a3a;"></div><div class="a" style="left:12px;top:350px;width:55px;height:1.5px;background:#3a3a3a;"></div><div class="a" style="left:12px;top:396px;width:55px;height:1.5px;background:#3a3a3a;"></div><div class="a" style="left:12px;top:454px;width:55px;height:93px;background:#282828;border-radius:6px;box-shadow:0 0 0 1px #3a3a3a,0 1px 2px rgba(0,0,0,0.3)"></div><div class="a" style="left:12px;top:499px;width:55px;height:1.5px;background:#3a3a3a;"></div><div class="a" style="left:12px;top:555.5px;width:55px;height:44px;background:#282828;border-radius:6px;box-shadow:0 0 0 1px #3a3a3a,0 1px 2px rgba(0,0,0,0.3)"></div><div class="a" style="left:12px;top:258px;width:55px;height:45px;background:#4772b3;border-radius:6px 6px 0 0"></div><svg class="a" style="left:12px;top:156px;" width="55" height="46" viewBox="0 0 55 46"><rect x="11" y="9.5" width="29.5" height="28" fill="none" stroke="#e0b070" stroke-width="2" stroke-dasharray="4.5 3"/><path d="M21.5 17.5 L32 26 L26.5 26.5 L21.5 31 Z" fill="#e8e8e8"/><path d="M49 43 L54 38 L54 43 Z" fill="#9a9a9a"/></svg><svg class="a" style="left:12px;top:202px;" width="55" height="46" viewBox="0 0 55 46"><circle cx="26.4" cy="23.4" r="15" fill="none" stroke="#fff" stroke-width="2.4"/><circle cx="26.4" cy="23.4" r="15" fill="none" stroke="#a83c4a" stroke-width="2.6" stroke-dasharray="7 4.8" stroke-dashoffset="2"/><path d="M26.4 14V20.5M26.4 26.5V33M17 23.4H23.5M29.5 23.4H36" stroke="#d8d8d8" stroke-width="1.5"/></svg><svg class="a" style="left:12px;top:258px;" width="55" height="45" viewBox="0 0 55 45"><path d="M25.7 6.5 L20.2 12.5 H31.2 Z M25.7 38 L20.2 32 H31.2 Z M9.8 22.3 L15.8 16.8 V27.8 Z M41.6 22.3 L35.6 16.8 V27.8 Z" fill="#e6e6e6"/><path d="M25.7 14.5V19M25.7 25.5V30M17.5 22.3H22M29.5 22.3H34" stroke="#e6e6e6" stroke-width="2.2"/></svg><svg class="a" style="left:12px;top:304px;" width="55" height="46" viewBox="0 0 55 46"><path d="M15 20 A12 12 0 0 1 37 17" stroke="#e6e6e6" stroke-width="2" fill="none"/><path d="M38 27 A12 12 0 0 1 16 30" stroke="#e6e6e6" stroke-width="2" fill="none"/><path d="M10 21 H19 L14.5 28 Z M34 27 H43 L38.5 20Z" fill="#e6e6e6"/><path d="M26.5 17 L32 23 L26.5 29 L21 23Z" fill="#bdbdbd"/></svg><svg class="a" style="left:12px;top:350px;" width="55" height="47" viewBox="0 0 55 47"><rect x="13" y="22" width="14" height="14" fill="#e6e6e6"/><path d="M20 21 V11 H39 V30 H29" stroke="#bdbdbd" stroke-width="2" fill="none"/><path d="M28 21 L36 13 M31 13 H36 V18" stroke="#e6e6e6" stroke-width="2" fill="none"/><path d="M49 43 L54 38 L54 43 Z" fill="#9a9a9a"/></svg><svg class="a" style="left:12px;top:397px;" width="55" height="47" viewBox="0 0 55 47"><path d="M39.59 28.47A14.4 14.4 0 0 1 29.72 38.34M21.78 38.34A14.4 14.4 0 0 1 11.91 28.47M11.91 20.53A14.4 14.4 0 0 1 21.78 10.66M29.72 10.66A14.4 14.4 0 0 1 39.59 20.53" fill="none" stroke="#e6e6e6" stroke-width="1.8"/><rect x="20" y="19" width="11.5" height="11.25" fill="#e6e6e6"/><path d="M25.75 10 L22.25 15 H29.25Z M25.75 39 L22.25 34 H29.25Z M11.3 24.5 L16.3 21 V28Z M40.2 24.5 L35.2 21 V28Z" fill="#e6e6e6"/></svg><svg class="a" style="left:12px;top:454px;" width="55" height="44" viewBox="0 0 55 44"><path d="M9 30.5 L11.5 24.5 L27 9 L31.5 13.5 L16 29 Z" fill="#e6e6e6" stroke="#282828" stroke-width="0.8"/><path d="M25.3 10.7 L29.8 15.2" stroke="#282828" stroke-width="1.2"/><path d="M11.5 31 Q19 38 26 29 Q33 20 43 31.5" stroke="#80d0a8" stroke-width="2" fill="none"/><path d="M49 43 L54 38 L54 43 Z" fill="#9a9a9a"/></svg><svg class="a" style="left:12px;top:498px;" width="55" height="47" viewBox="0 0 55 47"><path d="M21.2 36 V21 A15 15 0 0 1 36.2 36 Z" fill="#80d0a8"/><path d="M21.2 19.7 A16.3 16.3 0 0 1 37.5 36" stroke="#80d0a8" stroke-width="1.5" fill="none"/><rect x="13.4" y="9" width="7.8" height="32" fill="#e6e6e6"/><rect x="13.4" y="36" width="28.3" height="5" fill="#e6e6e6"/><path d="M17 12H21M18 15H21M17 18H21M18 21H21M17 24H21M18 27H21M17 30H21M18 33H21M24 36V38.5M27 36V38M30 36V38.5M33 36V38M36 36V38.5M39 36V38" stroke="#777" stroke-width="0.8"/></svg><svg class="a" style="left:12px;top:555px;" width="55" height="44" viewBox="0 0 55 44"><path d="M8.4 10 H18.4 M13.4 5 V15" stroke="#80d0a8" stroke-width="2.6"/><path d="M14.1 18.6 L21.1 11.6 H41.6 V31.4 L34.6 38.4 H14.1 Z M14.1 18.6 H34.6 V38.4 M34.6 18.6 L41.6 11.6" stroke="#80d0a8" stroke-width="1.6" fill="none"/><path d="M49 41 L54 36 L54 41 Z" fill="#9a9a9a"/></svg><div class="t" style="left:92px;top:158.3px;font-size:15px;color:#f0f0f0;-webkit-text-stroke:0.55px #f0f0f0;text-shadow:0 0 2px #000">ユーザー・透視投影</div><div class="t" style="left:92px;top:182.5px;font-size:16px;color:#f0f0f0;-webkit-text-stroke:0.45px #f0f0f0;text-shadow:0 0 2px #000">(67) Collection | Door</div><div class="a" style="left:891px;top:118px;width:297px;height:433px;background:#181818;border-radius:7px;box-shadow:0 2px 6px rgba(0,0,0,0.35)"></div><svg class="a" style="left:1030px;top:111px;" width="22" height="8" viewBox="0 0 22 8"><path d="M0 8 L6 1 H16 L22 8 Z" fill="#181818"/></svg><div class="t" style="left:906px;top:136.3px;font-size:15px;color:#a9a9a9;">スナップ先</div><div class="a" style="left:904.5px;top:161px;width:270.5px;height:188px;background:#545454;border-radius:5px"></div><div class="a" style="left:904.5px;top:186.75px;width:270.5px;height:1.5px;background:#3c3c3c;"></div><div class="a" style="left:904.5px;top:239.75px;width:270.5px;height:1.5px;background:#3c3c3c;"></div><div class="a" style="left:904.5px;top:267.25px;width:270.5px;height:1.5px;background:#3c3c3c;"></div><div class="a" style="left:904.5px;top:294.55px;width:270.5px;height:1.5px;background:#3c3c3c;"></div><div class="a" style="left:904.5px;top:321.45px;width:270.5px;height:1.5px;background:#3c3c3c;"></div><div class="a" style="left:904.5px;top:188px;width:270.5px;height:23.5px;background:#4772b3;"></div><div class="t" style="left:940px;top:166.3px;font-size:15px;color:#e2e2e2;">増分</div><div class="t" style="left:940px;top:193.3px;font-size:15px;color:#ffffff;">頂点</div><div class="t" style="left:940px;top:219.3px;font-size:15px;color:#e2e2e2;">辺</div><div class="t" style="left:940px;top:246.3px;font-size:15px;color:#e2e2e2;">面</div><div class="t" style="left:940px;top:273.3px;font-size:15px;color:#e2e2e2;">ボリューム</div><div class="t" style="left:940px;top:300.3px;font-size:15px;color:#e2e2e2;">辺の中心</div><div class="t" style="left:940px;top:327.3px;font-size:15px;color:#e2e2e2;">辺と直交する点</div><svg class="a" style="left:905px;top:161px;" width="30" height="188" viewBox="0 0 30 188"><rect x="20" y="4" width="5.5" height="5.5" fill="#d4d4d4"/><path d="M6 12.5 V17 H24 V12.5 M12 15V17 M18 15V17" stroke="#d4d4d4" stroke-width="1.2" fill="none"/><rect x="7" y="31.5" width="6" height="6" fill="#fff"/><rect x="18" y="31.5" width="6" height="6" fill="#fff"/><rect x="7" y="42.5" width="6" height="6" fill="#fff"/><rect x="18" y="42.5" width="6" height="6" fill="#fff"/><rect x="7" y="59" width="17" height="4" fill="#d4d4d4"/><rect x="7" y="71" width="17" height="4" fill="#d4d4d4"/><rect x="7" y="85" width="17" height="17" fill="#d4d4d4"/><path d="M6 116 L10 111 H25 V126 L21 130 H6 Z" fill="#d4d4d4"/><path d="M7 116 H20 V129 M20 116 L24 112" stroke="#545454" stroke-width="2" fill="none"/><path d="M6 155 L24 137" stroke="#d4d4d4" stroke-width="1.3"/><rect x="11.5" y="142.5" width="7" height="7" fill="#d4d4d4"/><path d="M6 163 V182 H24" stroke="#d4d4d4" stroke-width="1.3" fill="none"/><rect x="10" y="172" width="6" height="6" fill="#d4d4d4"/></svg><div class="a" style="left:897px;top:178px;width:297px;height:40px;background:transparent;border:6.3px solid #e8402a"></div><div class="t" style="left:906px;top:369.3px;font-size:15px;color:#a9a9a9;">スナップ方法</div><div class="a" style="left:905px;top:394px;width:269.5px;height:25px;background:#545454;border-radius:5px"></div><div class="a" style="left:905px;top:394px;width:66.5px;height:25px;background:#4772b3;border-radius:5px 0 0 5px"></div><div class="a" style="left:971.0px;top:394px;width:1.2px;height:25px;background:#3c3c3c;"></div><div class="a" style="left:1038.4px;top:394px;width:1.2px;height:25px;background:#3c3c3c;"></div><div class="a" style="left:1105.7px;top:394px;width:1.2px;height:25px;background:#3c3c3c;"></div><div class="t" style="left:923.0px;top:398.3px;font-size:15px;color:#ffffff;">近接</div><div class="t" style="left:990.0px;top:398.3px;font-size:15px;color:#e2e2e2;">中心</div><div class="t" style="left:1057.5px;top:398.3px;font-size:15px;color:#e2e2e2;">中点</div><div class="t" style="left:1114.0px;top:398.3px;font-size:15px;color:#e2e2e2;">アクテ...</div><div class="a" style="left:905px;top:427.3px;width:18px;height:18.3px;background:#545454;border-radius:4px"></div><div class="t" style="left:929px;top:428.3px;font-size:15px;color:#c8c8c8;">裏面を非表示</div><div class="a" style="left:905px;top:457.3px;width:18px;height:17.7px;background:#545454;border-radius:4px"></div><div class="t" style="left:929px;top:458.3px;font-size:15px;color:#c8c8c8;">ターゲットに回転を揃える</div><div class="t" style="left:906px;top:488.3px;font-size:15px;color:#a9a9a9;">影響</div><div class="a" style="left:905px;top:513px;width:269.5px;height:25px;background:#545454;border-radius:5px"></div><div class="a" style="left:905px;top:513px;width:88px;height:25px;background:#4772b3;border-radius:5px 0 0 5px"></div><div class="a" style="left:992.6px;top:513px;width:1.2px;height:25px;background:#3c3c3c;"></div><div class="a" style="left:1082.9px;top:513px;width:1.2px;height:25px;background:#3c3c3c;"></div><div class="t" style="left:933.6px;top:517.3px;font-size:15px;color:#ffffff;">移動</div><div class="t" style="left:1023.4000000000001px;top:517.3px;font-size:15px;color:#e2e2e2;">回転</div><div class="t" style="left:1098.6px;top:517.3px;font-size:15px;color:#e2e2e2;">スケール</div><div class="a" style="left:1972px;top:146px;width:28px;height:1057px;background:#1d1d1d;"></div><div class="a" style="left:1972px;top:151px;width:24px;height:80.5px;background:#303030;border-radius:0 6px 6px 0;border:1px solid #3a3a3a;border-left:none"></div><div class="t" style="left:1944px;top:183.25px;width:80px;height:16px;text-align:center;font-size:15px;line-height:16px;color:#e0e0e0;transform:rotate(-90deg)">アイテム</div><div class="a" style="left:1972px;top:238px;width:24px;height:64px;background:#232323;border-radius:0 6px 6px 0;border:1px solid #3a3a3a;border-left:none"></div><div class="t" style="left:1944px;top:262.0px;width:80px;height:16px;text-align:center;font-size:15px;line-height:16px;color:#e0e0e0;transform:rotate(-90deg)">ツール</div><div class="a" style="left:1972px;top:309.7px;width:24px;height:64.30000000000001px;background:#232323;border-radius:0 6px 6px 0;border:1px solid #3a3a3a;border-left:none"></div><div class="t" style="left:1944px;top:333.85px;width:80px;height:16px;text-align:center;font-size:15px;line-height:16px;color:#e0e0e0;transform:rotate(-90deg)">ビュー</div><div class="a" style="left:1712px;top:146.6px;width:249.5px;height:526px;background:#373737;border-radius:6px"></div><svg class="a" style="left:1720px;top:156px;" width="20" height="16" viewBox="0 0 20 16"><polyline points="3,5 8.5,11 14,5" stroke="#d8d8d8" stroke-width="1.6" fill="none"/></svg><div class="t" style="left:1739px;top:156.3px;font-size:15px;color:#e8e8e8;letter-spacing:0.2px">トランスフォーム</div><svg class="a" style="left:1937px;top:160px;" width="18" height="9" viewBox="0 0 18 9"><circle cx="1.0" cy="1.0" r="0.8" fill="#777"/><circle cx="1.0" cy="4.3" r="0.8" fill="#777"/><circle cx="1.0" cy="7.6" r="0.8" fill="#777"/><circle cx="4.3" cy="1.0" r="0.8" fill="#777"/><circle cx="4.3" cy="4.3" r="0.8" fill="#777"/><circle cx="4.3" cy="7.6" r="0.8" fill="#777"/><circle cx="7.6" cy="1.0" r="0.8" fill="#777"/><circle cx="7.6" cy="4.3" r="0.8" fill="#777"/><circle cx="7.6" cy="7.6" r="0.8" fill="#777"/><circle cx="10.9" cy="1.0" r="0.8" fill="#777"/><circle cx="10.9" cy="4.3" r="0.8" fill="#777"/><circle cx="10.9" cy="7.6" r="0.8" fill="#777"/><circle cx="14.2" cy="1.0" r="0.8" fill="#777"/><circle cx="14.2" cy="4.3" r="0.8" fill="#777"/><circle cx="14.2" cy="7.6" r="0.8" fill="#777"/></svg><div class="t" style="left:1725px;top:197.3px;font-size:15px;color:#d0d0d0;">位置:</div><div class="a" style="left:1724.5px;top:220.5px;width:170px;height:78.9px;background:#545454;border-radius:5px"></div><div class="a" style="left:1724.5px;top:246.10000000000002px;width:170px;height:1.4px;background:#3e3e3e;"></div><div class="a" style="left:1724.5px;top:272.40000000000003px;width:170px;height:1.4px;background:#3e3e3e;"></div><div class="t" style="left:1745px;top:224.9px;font-size:15.5px;color:#e6e6e6;">X</div><div class="t" style="right:123px;top:224.5px;font-size:16px;letter-spacing:0.5px;color:#e6e6e6">-0.8 m</div><svg class="a" style="left:1918px;top:224.35px;" width="22" height="16" viewBox="0 0 22 16"><path d="M2.3 10.5 V5.2 A4.6 4.6 0 0 1 11.5 5.2 V6.8" stroke="#c8c8c8" stroke-width="1.4" fill="none"/><rect x="7.6" y="6.8" width="12.6" height="7.4" fill="none" stroke="#c8c8c8" stroke-width="1.4"/><rect x="11.5" y="9.3" width="4.8" height="2.4" fill="#c8c8c8"/></svg><div class="t" style="left:1745px;top:251.2px;font-size:15.5px;color:#e6e6e6;">Y</div><div class="t" style="right:123px;top:250.8px;font-size:16px;letter-spacing:0.5px;color:#e6e6e6">0.072946 m</div><svg class="a" style="left:1918px;top:250.64999999999998px;" width="22" height="16" viewBox="0 0 22 16"><path d="M2.3 10.5 V5.2 A4.6 4.6 0 0 1 11.5 5.2 V6.8" stroke="#c8c8c8" stroke-width="1.4" fill="none"/><rect x="7.6" y="6.8" width="12.6" height="7.4" fill="none" stroke="#c8c8c8" stroke-width="1.4"/><rect x="11.5" y="9.3" width="4.8" height="2.4" fill="#c8c8c8"/></svg><div class="t" style="left:1745px;top:277.5px;font-size:15.5px;color:#e6e6e6;">Z</div><div class="t" style="right:123px;top:277.1px;font-size:16px;letter-spacing:0.5px;color:#e6e6e6">0 m</div><svg class="a" style="left:1918px;top:276.95px;" width="22" height="16" viewBox="0 0 22 16"><path d="M2.3 10.5 V5.2 A4.6 4.6 0 0 1 11.5 5.2 V6.8" stroke="#c8c8c8" stroke-width="1.4" fill="none"/><rect x="7.6" y="6.8" width="12.6" height="7.4" fill="none" stroke="#c8c8c8" stroke-width="1.4"/><rect x="11.5" y="9.3" width="4.8" height="2.4" fill="#c8c8c8"/></svg><div class="t" style="left:1725px;top:308.3px;font-size:15px;color:#d0d0d0;">回転:</div><div class="a" style="left:1724.5px;top:331px;width:170px;height:78.9px;background:#545454;border-radius:5px"></div><div class="a" style="left:1724.5px;top:356.6px;width:170px;height:1.4px;background:#3e3e3e;"></div><div class="a" style="left:1724.5px;top:382.90000000000003px;width:170px;height:1.4px;background:#3e3e3e;"></div><div class="t" style="left:1745px;top:335.4px;font-size:15.5px;color:#e6e6e6;">X</div><div class="t" style="right:123px;top:334.9px;font-size:16px;letter-spacing:0.5px;color:#e6e6e6">0°</div><svg class="a" style="left:1918px;top:334.84999999999997px;" width="22" height="16" viewBox="0 0 22 16"><path d="M2.3 10.5 V5.2 A4.6 4.6 0 0 1 11.5 5.2 V6.8" stroke="#c8c8c8" stroke-width="1.4" fill="none"/><rect x="7.6" y="6.8" width="12.6" height="7.4" fill="none" stroke="#c8c8c8" stroke-width="1.4"/><rect x="11.5" y="9.3" width="4.8" height="2.4" fill="#c8c8c8"/></svg><div class="t" style="left:1745px;top:361.7px;font-size:15.5px;color:#e6e6e6;">Y</div><div class="t" style="right:123px;top:361.2px;font-size:16px;letter-spacing:0.5px;color:#e6e6e6">0°</div><svg class="a" style="left:1918px;top:361.15px;" width="22" height="16" viewBox="0 0 22 16"><path d="M2.3 10.5 V5.2 A4.6 4.6 0 0 1 11.5 5.2 V6.8" stroke="#c8c8c8" stroke-width="1.4" fill="none"/><rect x="7.6" y="6.8" width="12.6" height="7.4" fill="none" stroke="#c8c8c8" stroke-width="1.4"/><rect x="11.5" y="9.3" width="4.8" height="2.4" fill="#c8c8c8"/></svg><div class="t" style="left:1745px;top:388.0px;font-size:15.5px;color:#e6e6e6;">Z</div><div class="t" style="right:123px;top:387.6px;font-size:16px;letter-spacing:0.5px;color:#e6e6e6">0°</div><svg class="a" style="left:1918px;top:387.45px;" width="22" height="16" viewBox="0 0 22 16"><path d="M2.3 10.5 V5.2 A4.6 4.6 0 0 1 11.5 5.2 V6.8" stroke="#c8c8c8" stroke-width="1.4" fill="none"/><rect x="7.6" y="6.8" width="12.6" height="7.4" fill="none" stroke="#c8c8c8" stroke-width="1.4"/><rect x="11.5" y="9.3" width="4.8" height="2.4" fill="#c8c8c8"/></svg><div class="a" style="left:1724.5px;top:415.2px;width:224.5px;height:23.5px;background:#282828;border-radius:5px"></div><div class="t" style="left:1734px;top:419.3px;font-size:15px;color:#e6e6e6;">XYZ オイラー角</div><svg class="a" style="left:1933px;top:420px;" width="20" height="14" viewBox="0 0 20 14"><polyline points="3,4 8,9 13,4" stroke="#d8d8d8" stroke-width="1.6" fill="none"/></svg><div class="t" style="left:1725px;top:448.3px;font-size:15px;color:#d0d0d0;">スケール:</div><div class="a" style="left:1724.5px;top:471.4px;width:170px;height:78.9px;background:#545454;border-radius:5px"></div><div class="a" style="left:1724.5px;top:497.0px;width:170px;height:1.4px;background:#3e3e3e;"></div><div class="a" style="left:1724.5px;top:523.3px;width:170px;height:1.4px;background:#3e3e3e;"></div><div class="t" style="left:1745px;top:475.8px;font-size:15.5px;color:#e6e6e6;">X</div><div class="t" style="right:123px;top:475.3px;font-size:16px;letter-spacing:0.5px;color:#e6e6e6">1.000</div><svg class="a" style="left:1918px;top:475.24999999999994px;" width="22" height="16" viewBox="0 0 22 16"><path d="M2.3 10.5 V5.2 A4.6 4.6 0 0 1 11.5 5.2 V6.8" stroke="#c8c8c8" stroke-width="1.4" fill="none"/><rect x="7.6" y="6.8" width="12.6" height="7.4" fill="none" stroke="#c8c8c8" stroke-width="1.4"/><rect x="11.5" y="9.3" width="4.8" height="2.4" fill="#c8c8c8"/></svg><div class="t" style="left:1745px;top:502.1px;font-size:15.5px;color:#e6e6e6;">Y</div><div class="t" style="right:123px;top:501.6px;font-size:16px;letter-spacing:0.5px;color:#e6e6e6">1.000</div><svg class="a" style="left:1918px;top:501.54999999999995px;" width="22" height="16" viewBox="0 0 22 16"><path d="M2.3 10.5 V5.2 A4.6 4.6 0 0 1 11.5 5.2 V6.8" stroke="#c8c8c8" stroke-width="1.4" fill="none"/><rect x="7.6" y="6.8" width="12.6" height="7.4" fill="none" stroke="#c8c8c8" stroke-width="1.4"/><rect x="11.5" y="9.3" width="4.8" height="2.4" fill="#c8c8c8"/></svg><div class="t" style="left:1745px;top:528.4px;font-size:15.5px;color:#e6e6e6;">Z</div><div class="t" style="right:123px;top:527.9px;font-size:16px;letter-spacing:0.5px;color:#e6e6e6">1.000</div><svg class="a" style="left:1918px;top:527.85px;" width="22" height="16" viewBox="0 0 22 16"><path d="M2.3 10.5 V5.2 A4.6 4.6 0 0 1 11.5 5.2 V6.8" stroke="#c8c8c8" stroke-width="1.4" fill="none"/><rect x="7.6" y="6.8" width="12.6" height="7.4" fill="none" stroke="#c8c8c8" stroke-width="1.4"/><rect x="11.5" y="9.3" width="4.8" height="2.4" fill="#c8c8c8"/></svg><div class="t" style="left:1725px;top:559.3px;font-size:15px;color:#d0d0d0;">寸法:</div><div class="a" style="left:1724.5px;top:582.3px;width:225px;height:78.9px;background:#545454;border-radius:5px"></div><div class="a" style="left:1724.5px;top:607.8999999999999px;width:225px;height:1.4px;background:#3e3e3e;"></div><div class="a" style="left:1724.5px;top:634.1999999999999px;width:225px;height:1.4px;background:#3e3e3e;"></div><div class="t" style="left:1745px;top:586.7px;font-size:15.5px;color:#e6e6e6;">X</div><div class="t" style="right:67px;top:586.2px;font-size:16px;letter-spacing:0.5px;color:#e6e6e6">1.6 m</div><div class="t" style="left:1745px;top:613.0px;font-size:15.5px;color:#e6e6e6;">Y</div><div class="t" style="right:67px;top:612.5px;font-size:16px;letter-spacing:0.5px;color:#e6e6e6">0.146 m</div><div class="t" style="left:1745px;top:639.3px;font-size:15.5px;color:#e6e6e6;">Z</div><div class="t" style="right:67px;top:638.8px;font-size:16px;letter-spacing:0.5px;color:#e6e6e6">2.8 m</div><svg class="a" style="left:1580px;top:150px" width="120" height="270" viewBox="0 0 120 270"><circle cx="54" cy="105" r="10" fill="#3a4a62" stroke="#3d86e0" stroke-width="2.6"/><circle cx="81.5" cy="57" r="9" fill="#3a3a3a" stroke="#78c050" stroke-width="2.6"/><circle cx="87.5" cy="65.5" r="10.5" fill="#7a3c48" stroke="#e8485e" stroke-width="2.6"/><line x1="54" y1="61.5" x2="54" y2="27" stroke="#3d86e0" stroke-width="3.5"/><circle cx="54" cy="19" r="11" fill="#3d86e0"/><text x="54" y="24.5" text-anchor="middle" font-family="Liberation Sans" font-size="15" font-weight="bold" fill="#0d2550">Z</text><polygon points="54,60 54,63.5 26,58 26,54" fill="#c9404f"/><circle cx="20.5" cy="56.5" r="10" fill="#c9404f"/><polygon points="54,60.5 54,63 30,68 29,65" fill="#80d44d"/><circle cx="26" cy="66.8" r="11.5" fill="#80d44d" stroke="#2a2a2a" stroke-width="1"/><text x="26" y="72.5" text-anchor="middle" font-family="Liberation Sans" font-size="15" font-weight="bold" fill="#1a3a10">Y</text></svg><svg class="a" style="left:1650px;top:265px" width="42" height="165" viewBox="0 0 42 165"><circle cx="21" cy="21.2" r="18.7" fill="#2c2c2c"/><circle cx="21" cy="61.6" r="18.7" fill="#2c2c2c"/><circle cx="21" cy="102" r="18.7" fill="#2c2c2c"/><circle cx="21" cy="142.3" r="18.7" fill="#2c2c2c"/><circle cx="23.5" cy="18.5" r="8" fill="#e6e6e6"/><path d="M19.5 18.5H27.5M23.5 14.5V22.5" stroke="#2c2c2c" stroke-width="1.5"/><path d="M17 25 L11 31" stroke="#e6e6e6" stroke-width="3" stroke-linecap="round"/><path d="M12 62 Q14 60 17 63 V52 Q17 50 19 50 Q21 50 21 52 V60 V49 Q21 47 23 47 Q25 47 25 49 V60 V50 Q25 48 27 48 Q29 48 29 50 V61 V54 Q29 52 31 52 Q33 52 33 54 V64 Q33 72 24 72 Q18 72 12 62Z" fill="#e6e6e6"/><circle cx="16.5" cy="95" r="5.5" fill="#e6e6e6"/><circle cx="26.5" cy="94" r="5.5" fill="#e6e6e6"/><circle cx="16.5" cy="95" r="1.5" fill="#2c2c2c"/><circle cx="26.5" cy="94" r="1.5" fill="#2c2c2c"/><rect x="14" y="101" width="14" height="9" fill="#e6e6e6"/><path d="M28 105 L33 101 V110 Z M14 103 H11 V108 H14" fill="#e6e6e6"/><path d="M14.5 132 H27.5 L32 151 H10 Z" fill="none" stroke="#e6e6e6" stroke-width="2"/><path d="M12.5 138.5 H29.5 M11.3 144.5 H30.8 M18.5 132 L17.2 151 M23.5 132 L24.8 151" stroke="#e6e6e6" stroke-width="2"/></svg></body></html>
